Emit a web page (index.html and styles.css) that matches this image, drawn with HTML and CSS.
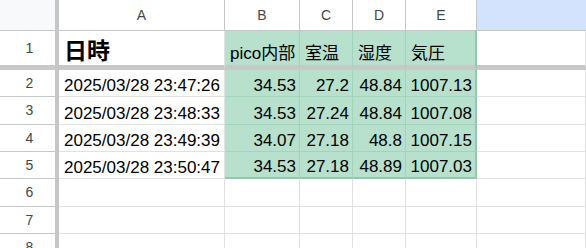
FILE: index.html
```html
<!DOCTYPE html>
<html lang="ja">
<head>
    <meta charset="utf-8" />
    <title>pico ログ</title>
    <link rel="stylesheet" href="styles.css">
</head>
<body>
    <div class="sheet">
        <!-- 列見出し -->
        <div class="corner"></div>
        <div class="col_head">A</div>
        <div class="col_head">B</div>
        <div class="col_head">C</div>
        <div class="col_head">D</div>
        <div class="col_head">E</div>
        <div class="col_head selected"></div>

        <!-- 1行目（固定） -->
        <div class="row_head frozen">1</div>
        <div class="cell frozen title">日時</div>
        <div class="cell frozen fill">pico内部</div>
        <div class="cell frozen fill">室温</div>
        <div class="cell frozen fill">湿度</div>
        <div class="cell frozen fill last">気圧</div>
        <div class="cell frozen"></div>

        <div class="row_head">2</div>
        <div class="cell">2025/03/28 23:47:26</div>
        <div class="cell fill num">34.53</div>
        <div class="cell fill num">27.2</div>
        <div class="cell fill num">48.84</div>
        <div class="cell fill num last">1007.13</div>
        <div class="cell"></div>

        <div class="row_head">3</div>
        <div class="cell">2025/03/28 23:48:33</div>
        <div class="cell fill num">34.53</div>
        <div class="cell fill num">27.24</div>
        <div class="cell fill num">48.84</div>
        <div class="cell fill num last">1007.08</div>
        <div class="cell"></div>

        <div class="row_head">4</div>
        <div class="cell">2025/03/28 23:49:39</div>
        <div class="cell fill num">34.07</div>
        <div class="cell fill num">27.18</div>
        <div class="cell fill num">48.8</div>
        <div class="cell fill num last">1007.15</div>
        <div class="cell"></div>

        <div class="row_head">5</div>
        <div class="cell">2025/03/28 23:50:47</div>
        <div class="cell fill num bottom">34.53</div>
        <div class="cell fill num bottom">27.18</div>
        <div class="cell fill num bottom">48.89</div>
        <div class="cell fill num last bottom">1007.03</div>
        <div class="cell"></div>

        <div class="row_head">6</div>
        <div class="cell"></div><div class="cell"></div><div class="cell"></div>
        <div class="cell"></div><div class="cell"></div><div class="cell"></div>

        <div class="row_head">7</div>
        <div class="cell"></div><div class="cell"></div><div class="cell"></div>
        <div class="cell"></div><div class="cell"></div><div class="cell"></div>

        <div class="row_head">8</div>
        <div class="cell"></div><div class="cell"></div><div class="cell"></div>
        <div class="cell"></div><div class="cell"></div><div class="cell"></div>
    </div>
</body>
</html>
```

FILE: styles.css
```css
*
{
    margin: 0;
    padding: 0;
    box-sizing: border-box;
}

body
{
    font-family: 'Liberation Sans', Arial, 'Noto Sans CJK JP', sans-serif;
    background: #fff;
    overflow: hidden;
}

.sheet
{
    display: grid;
    grid-template-columns: 59px 166px 75px 53px 53px 71px 1fr;
    grid-template-rows: 31px 39px repeat(6, 27.34px) 27px;
    width: 586px;
    height: 248px;
    overflow: hidden;
}

.corner
{
    background: #f8f9fa;
    border-right: 4px solid #c4c7c5;
    border-bottom: 1px solid #c4c7c5;
}

.col_head
{
    display: flex;
    align-items: center;
    justify-content: center;
    font-size: 14px;
    color: #444746;
    border-right: 1px solid #c4c7c5;
    border-bottom: 1px solid #c4c7c5;
}

    .col_head.selected
    {
        background: #d3e3fd;
        border-right: none;
    }

.row_head
{
    display: flex;
    align-items: center;
    justify-content: center;
    font-size: 14px;
    color: #444746;
    padding-left: 4px;
    border-right: 4px solid #c4c7c5;
    border-bottom: 1px solid #c4c7c5;
}

.cell
{
    display: flex;
    align-items: flex-end;
    padding: 0 3px 0 5px;
    font-size: 17px;
    line-height: 20px;
    color: #000;
    white-space: nowrap;
    overflow: hidden;
    border-right: 1px solid #e1e1e1;
    border-bottom: 1px solid #e1e1e1;
}

    .cell.num
    {
        justify-content: flex-end;
    }

    .cell.fill
    {
        background: #b7e1cd;
        border-right-color: #a2d3bb;
        border-bottom-color: #a2d3bb;
    }

    .cell.last
    {
        border-right: 2px solid #93c8ad;
    }

    .cell.bottom
    {
        border-bottom: 2px solid #93c8ad;
    }

/* 固定行の下の太線 */
.frozen
{
    border-bottom: 5px solid #c8c8c8 !important;
}

.cell.frozen
{
    padding-bottom: 1px;
}

.cell.title
{
    font-size: 23px;
    font-weight: bold;
    line-height: 26px;
}
```
